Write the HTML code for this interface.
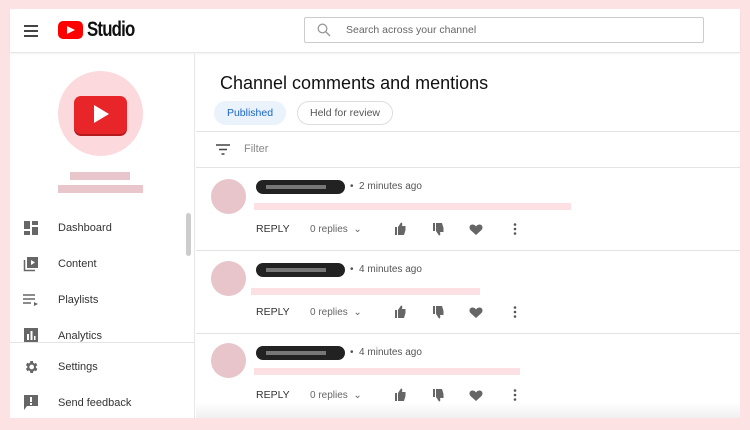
<!DOCTYPE html><html><head><style>
*{margin:0;padding:0;box-sizing:border-box}
body{width:750px;height:430px;background:#fde2e4;font-family:"Liberation Sans",sans-serif;position:relative;overflow:hidden}
.a{position:absolute}
.panel{left:10px;top:9px;width:730px;height:409px;background:#fff}
.hdr{left:10px;top:9px;width:730px;height:44px;border-bottom:1px solid #e6e6e6;box-shadow:0 1px 2px rgba(0,0,0,.05);background:#fff}
.side{left:10px;top:54px;width:185px;height:364px;border-right:1px solid #e6e6e6}
.nav{color:#333;font-size:11px}
.t{color:#555;font-size:10px}
.sep{height:1px;background:#e4e4e4}
.pill{width:89px;height:14px;border-radius:7px;background:#222}
.pill::after{content:"";position:absolute;left:10px;top:5px;width:60px;height:4px;background:#777}
</style></head><body>
<div class="a panel"></div>
<div class="a hdr"></div>
<div class="a" style="left:24px;top:25px;width:14px;height:2px;background:#444"></div>
<div class="a" style="left:24px;top:30px;width:14px;height:2px;background:#444"></div>
<div class="a" style="left:24px;top:35px;width:14px;height:2px;background:#444"></div>
<div class="a" style="left:58px;top:21px;width:25px;height:18px;background:#f00;border-radius:5px"></div>
<svg class="a" style="left:66px;top:25px" width="10" height="10"><path d="M1 1L9 5L1 9Z" fill="#fff"/></svg>
<div class="a" style="left:87px;top:18px;font-size:21px;font-weight:bold;color:#111;letter-spacing:-1px;transform:scaleX(.8);transform-origin:left">Studio</div>
<div class="a" style="left:304px;top:17px;width:400px;height:26px;border:1px solid #ccc;border-radius:2px"></div>
<svg class="a" style="left:317px;top:23px" width="14" height="14"><circle cx="5.5" cy="5.5" r="4.3" fill="none" stroke="#999" stroke-width="1.3"/><path d="M8.5 8.5L13 13" stroke="#999" stroke-width="1.4"/></svg>
<div class="a" style="left:346px;top:24px;font-size:10.5px;color:#666">Search across your channel</div>
<div class="a side"></div>
<div class="a" style="left:58px;top:71px;width:85px;height:85px;border-radius:50%;background:#fcd9dc"></div>
<div class="a" style="left:74px;top:96px;width:53px;height:38px;border-radius:7px;background:#e8262a;box-shadow:0 2px 0 #b51a1e"></div>
<svg class="a" style="left:93px;top:104px" width="18" height="20"><path d="M1 1L16 10L1 19Z" fill="#fff"/></svg>
<div class="a" style="left:70px;top:172px;width:60px;height:8px;background:#e8c6cc"></div>
<div class="a" style="left:58px;top:185px;width:85px;height:8px;background:#e8c6cc"></div>
<div class="a" style="left:186px;top:213px;width:5px;height:43px;border-radius:3px;background:#ccc"></div>
<svg class="a" style="left:24px;top:221px" width="14" height="14"><rect x="0" y="0" width="6" height="8" fill="#666"/><rect x="8" y="0" width="6" height="4" fill="#666"/><rect x="0" y="10" width="6" height="4" fill="#666"/><rect x="8" y="6" width="6" height="8" fill="#666"/></svg>
<div class="a nav" style="left:58px;top:222px">Dashboard</div>
<svg class="a" style="left:23px;top:256px" width="16" height="16"><rect x="4" y="1" width="11" height="11" fill="#666"/><path d="M8 4L12 6.5L8 9Z" fill="#fff"/><path d="M1.5 4V14.5H12" fill="none" stroke="#666" stroke-width="1.5"/></svg>
<div class="a nav" style="left:58px;top:258px">Content</div>
<svg class="a" style="left:23px;top:293px" width="16" height="14"><path d="M0 2H12M0 6H12M0 10H8" stroke="#666" stroke-width="1.4"/><path d="M11 9L15 11L11 13Z" fill="#666"/></svg>
<div class="a nav" style="left:58px;top:294px">Playlists</div>
<svg class="a" style="left:24px;top:328px" width="14" height="14"><rect width="14" height="14" fill="#666"/><rect x="3" y="6" width="2" height="6" fill="#fff"/><rect x="6.5" y="3" width="2" height="9" fill="#fff"/><rect x="10" y="8" width="1.5" height="4" fill="#fff"/></svg>
<div class="a nav" style="left:58px;top:330px">Analytics</div>
<div class="a sep" style="left:10px;top:342px;width:185px"></div>
<svg class="a" style="left:23px;top:359px" width="16" height="16" viewBox="0 0 24 24"><path fill="#666" d="M19.4 13a7.5 7.5 0 0 0 0-2l2.1-1.6-2-3.5-2.5 1a7 7 0 0 0-1.7-1L15 3h-4l-.4 2.7a7 7 0 0 0-1.7 1l-2.5-1-2 3.5L6.5 11a7.5 7.5 0 0 0 0 2l-2.1 1.6 2 3.5 2.5-1a7 7 0 0 0 1.7 1L11 21h4l.4-2.7a7 7 0 0 0 1.7-1l2.5 1 2-3.5zM13 15.5a3.5 3.5 0 1 1 0-7 3.5 3.5 0 0 1 0 7z"/></svg>
<div class="a nav" style="left:58px;top:361px">Settings</div>
<svg class="a" style="left:24px;top:395px" width="14" height="16"><path d="M0 0H14V11H3L0 15Z" fill="#666"/><rect x="6" y="2" width="2" height="5" fill="#fff"/><rect x="6" y="8" width="2" height="2" fill="#fff"/></svg>
<div class="a nav" style="left:58px;top:397px">Send feedback</div>
<div class="a" style="left:220px;top:73px;font-size:18px;color:#111">Channel comments and mentions</div>
<div class="a" style="left:214px;top:101px;width:72px;height:24px;border-radius:12px;background:#eaf2fb;color:#1a65c9;font-size:10.5px;text-align:center;line-height:24px">Published</div>
<div class="a" style="left:297px;top:101px;width:96px;height:24px;border-radius:12px;border:1px solid #ddd;color:#555;font-size:10.5px;text-align:center;line-height:22px">Held for review</div>
<div class="a sep" style="left:196px;top:131px;width:544px"></div>
<svg class="a" style="left:216px;top:144px" width="14" height="11"><path d="M0 1H14M3 5.5H11M5.5 10H8.5" stroke="#444" stroke-width="1.5"/></svg>
<div class="a" style="left:244px;top:143px;font-size:11px;color:#888">Filter</div>
<div class="a sep" style="left:196px;top:167px;width:544px"></div>

<div class="a" style="left:211px;top:179px;width:35px;height:35px;border-radius:50%;background:#e8c4cb"></div>
<div class="a pill" style="left:256px;top:180px"></div>
<div class="a t" style="left:350px;top:181px">•&nbsp; 2 minutes ago</div>
<div class="a" style="left:254px;top:203px;width:317px;height:7px;background:#fde0e4"></div>
<div class="a sep" style="left:196px;top:250px;width:544px"></div>

<div class="a" style="left:211px;top:261px;width:35px;height:35px;border-radius:50%;background:#e8c4cb"></div>
<div class="a pill" style="left:256px;top:263px"></div>
<div class="a t" style="left:350px;top:264px">•&nbsp; 4 minutes ago</div>
<div class="a" style="left:251px;top:288px;width:229px;height:7px;background:#fde0e4"></div>
<div class="a sep" style="left:196px;top:333px;width:544px"></div>

<div class="a" style="left:211px;top:343px;width:35px;height:35px;border-radius:50%;background:#e8c4cb"></div>
<div class="a pill" style="left:256px;top:346px"></div>
<div class="a t" style="left:350px;top:347px">•&nbsp; 4 minutes ago</div>
<div class="a" style="left:254px;top:368px;width:266px;height:7px;background:#fde0e4"></div>

<div class="a" style="left:256px;top:223px;font-size:10.5px;color:#333">REPLY</div>
<div class="a t" style="left:310px;top:224px;color:#666">0 replies &nbsp;⌄</div>
<div class="a" style="left:256px;top:306px;font-size:10.5px;color:#333">REPLY</div>
<div class="a t" style="left:310px;top:307px;color:#666">0 replies &nbsp;⌄</div>
<div class="a" style="left:256px;top:389px;font-size:10.5px;color:#333">REPLY</div>
<div class="a t" style="left:310px;top:390px;color:#666">0 replies &nbsp;⌄</div>

<svg class="a" style="left:390px;top:222px" width="135" height="190">
<defs><g id="act">
<path d="M3 5H5V13H3ZM6 5L9 0.5C10.5 0.5 10.5 2 10 4H13.5V8L12 13H6Z" fill="#666" transform="translate(2,0)"/>
<path d="M3 0H5V8H3ZM6 8L9 12.5C10.5 12.5 10.5 11 10 9H13.5V5L12 0H6Z" fill="#666" transform="translate(40,1)"/>
<path d="M86 13L80.5 8C79 6.5 79 3 82 2.5C84 2.2 85.5 3.5 86 4.5C86.5 3.5 88 2.2 90 2.5C93 3 93 6.5 91.5 8Z" fill="#666"/>
<circle cx="125" cy="2.5" r="1.3" fill="#555"/><circle cx="125" cy="7" r="1.3" fill="#555"/><circle cx="125" cy="11.5" r="1.3" fill="#555"/>
</g></defs>
<use href="#act" y="0"/><use href="#act" y="83"/><use href="#act" y="166"/>
</svg>
<div class="a" style="left:196px;top:403px;width:544px;height:15px;background:linear-gradient(rgba(255,255,255,0),#f0f0f0)"></div>
</body></html>
